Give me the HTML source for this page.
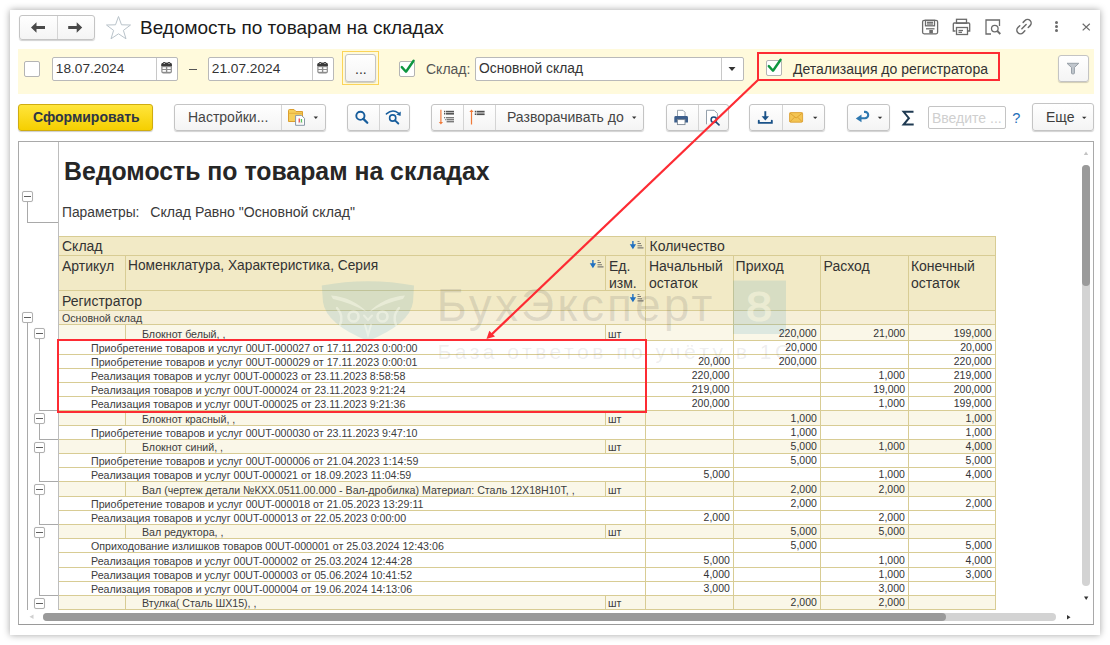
<!DOCTYPE html><html><head><meta charset="utf-8"><style>
*{margin:0;padding:0;box-sizing:border-box}
html,body{width:1110px;height:645px;overflow:hidden;background:#fff}
body{position:relative;font-family:"Liberation Sans",sans-serif}
.a,.t{position:absolute}
.t{white-space:nowrap}
.btn{position:absolute;border:1px solid #c4c4c4;border-radius:3px;background:linear-gradient(#fff,#f4f4f4);box-shadow:0 1px 1px rgba(0,0,0,.18)}
.sep{position:absolute;top:0;bottom:0;width:1px;background:#d4d4d4}
.fld{position:absolute;border:1px solid #b9b9b9;border-radius:2px;background:#fff}
.cb{position:absolute;border:1px solid #b4b4b4;border-radius:2px;background:#fff;width:16px;height:16px}
svg{position:absolute;overflow:visible}
</style></head><body>
<div class="a" style="left:10px;top:10px;width:1090px;height:625px;background:#fff;box-shadow:0 0 7px rgba(0,0,0,.36)"></div>
<div class="btn" style="left:19px;top:15px;width:76px;height:25px"><div class="sep" style="left:37px"></div></div>
<svg style="left:0;top:0" width="1" height="1"><path d="M31 27.5 L36.5 22.3 L36.5 25.9 L45 25.9 L45 29.1 L36.5 29.1 L36.5 32.7 Z" fill="#4a4a4a"/><path d="M82.2 27.5 L76.7 22.3 L76.7 25.9 L68.2 25.9 L68.2 29.1 L76.7 29.1 L76.7 32.7 Z" fill="#4a4a4a"/></svg>
<svg style="left:0;top:0" width="1" height="1"><path d="M118.5 16.5 L121.5 24.8 L130.5 25 L123.4 30.4 L126 38.8 L118.5 33.8 L111 38.8 L113.6 30.4 L106.5 25 L115.5 24.8 Z" fill="none" stroke="#b9c3ca" stroke-width="1"/></svg>
<div class="t" style="left:140.00px;top:18.22px;font-size:19px;line-height:19px;color:#1a1a1a;font-weight:400;">Ведомость по товарам на складах</div>
<svg style="left:0;top:0" width="1" height="1" fill="none" stroke="#6b6b6b" stroke-width="1.3">
<rect x="922.6" y="20.3" width="15" height="13.5" rx="1.5"/>
<rect x="925.5" y="20.3" width="9" height="5.5"/><line x1="927" y1="22.3" x2="933" y2="22.3"/><line x1="927" y1="24" x2="933" y2="24"/>
<rect x="929.3" y="30" width="3.6" height="3.2" fill="#6b6b6b" stroke="none"/><line x1="926" y1="28.8" x2="934.5" y2="28.8"/>
<rect x="956.5" y="19.3" width="10" height="4"/>
<path d="M955.5 31 H953.3 V24 a1 1 0 0 1 1-1 H968.7 a1 1 0 0 1 1 1 V31 H967.5"/>
<rect x="956.5" y="27.5" width="11" height="7"/><line x1="958.5" y1="30.5" x2="963" y2="30.5"/><line x1="958.5" y1="32.3" x2="962" y2="32.3"/>
<path d="M991 34 H986 V20 H999.5 V26"/>
<circle cx="994.8" cy="28.6" r="3.3"/><line x1="997.3" y1="31" x2="1000.3" y2="34" stroke-width="1.8"/>
<g transform="translate(1024 26.6) rotate(-45)"><path d="M2.4 -3.6 H5 a3.6 3.6 0 0 1 0 7.2 H2.4 M-2.4 -3.6 H-5 a3.6 3.6 0 0 0 0 7.2 H-2.4 M-3 0 H3" stroke-width="1.5" stroke-linecap="round"/></g>
</svg>
<div class="a" style="left:1055px;top:20.5px;width:3.2px;height:3.2px;border-radius:50%;background:#6b6b6b"></div>
<div class="a" style="left:1055px;top:24.6px;width:3.2px;height:3.2px;border-radius:50%;background:#6b6b6b"></div>
<div class="a" style="left:1055px;top:28.7px;width:3.2px;height:3.2px;border-radius:50%;background:#6b6b6b"></div>
<svg style="left:0;top:0" width="1" height="1"><path d="M1082.7 23.7 L1089.8 30.4 M1089.8 23.7 L1082.7 30.4" stroke="#6b6b6b" stroke-width="1.2"/></svg>
<div class="a" style="left:18px;top:49px;width:1076px;height:45px;background:#fffadc"></div>
<div class="cb" style="left:24px;top:61px;width:16px;height:16px"></div>
<div class="fld" style="left:52px;top:57px;width:126px;height:24px"><div class="sep" style="left:103px;background:#c8c8c8"></div></div>
<div class="t" style="left:55.80px;top:61.70px;font-size:13.7px;line-height:13.7px;color:#333;font-weight:400;">18.07.2024</div>
<svg style="left:0;top:0" width="1" height="1">
<rect x="161.3" y="62.8" width="10.6" height="10.6" rx="2" fill="#8c8c8c"/>
<path d="M161.3 66 V64.8 a2 2 0 0 1 2-2 H169.9 a2 2 0 0 1 2 2 V66 Z" fill="#3a3a3a"/>
<circle cx="164.20000000000002" cy="63.2" r="1.3" fill="#3a3a3a"/><circle cx="169.0" cy="63.2" r="1.3" fill="#3a3a3a"/>
<circle cx="164.20000000000002" cy="63.5" r="0.6" fill="#fff"/><circle cx="169.0" cy="63.5" r="0.6" fill="#fff"/>
<g fill="#fff"><rect x="162.5" y="67.2" width="3.4" height="1.8"/><rect x="167.3" y="67.2" width="3.4" height="1.8"/>
<rect x="162.5" y="70" width="3.4" height="1.8"/><rect x="167.3" y="70" width="3.4" height="1.8"/></g></svg>
<div class="fld" style="left:208px;top:57px;width:126px;height:24px"><div class="sep" style="left:103px;background:#c8c8c8"></div></div>
<div class="t" style="left:211.80px;top:61.70px;font-size:13.7px;line-height:13.7px;color:#333;font-weight:400;">21.07.2024</div>
<svg style="left:0;top:0" width="1" height="1">
<rect x="317.3" y="62.8" width="10.6" height="10.6" rx="2" fill="#8c8c8c"/>
<path d="M317.3 66 V64.8 a2 2 0 0 1 2-2 H325.90000000000003 a2 2 0 0 1 2 2 V66 Z" fill="#3a3a3a"/>
<circle cx="320.2" cy="63.2" r="1.3" fill="#3a3a3a"/><circle cx="325.0" cy="63.2" r="1.3" fill="#3a3a3a"/>
<circle cx="320.2" cy="63.5" r="0.6" fill="#fff"/><circle cx="325.0" cy="63.5" r="0.6" fill="#fff"/>
<g fill="#fff"><rect x="318.5" y="67.2" width="3.4" height="1.8"/><rect x="323.3" y="67.2" width="3.4" height="1.8"/>
<rect x="318.5" y="70" width="3.4" height="1.8"/><rect x="323.3" y="70" width="3.4" height="1.8"/></g></svg>
<div class="a" style="left:189px;top:69px;width:8px;height:1.2px;background:#555"></div>
<div class="a" style="left:342px;top:51px;width:37px;height:34px;border:1.5px solid #fbd458;background:transparent"></div>
<div class="btn" style="left:345px;top:54px;width:31px;height:28px"></div>
<div class="t" style="left:355.00px;top:61.65px;font-size:14px;line-height:14px;color:#333;font-weight:400;">...</div>
<div class="cb" style="left:399px;top:61px"></div>
<svg style="left:0;top:0" width="1" height="1"><path d="M401.8 67.1 L406 71.7 L413.6 60.8" fill="none" stroke="#0e9640" stroke-width="2.4" stroke-linecap="round" stroke-linejoin="round"/></svg>
<div class="t" style="left:426.00px;top:62.15px;font-size:14px;line-height:14px;color:#555;font-weight:400;">Склад:</div>
<div class="fld" style="left:475px;top:57px;width:269px;height:24px"><div class="sep" style="left:245px;background:#c8c8c8"></div></div>
<div class="t" style="left:479.00px;top:61.62px;font-size:13.8px;line-height:13.8px;color:#333;font-weight:400;">Основной склад</div>
<svg style="left:0;top:0" width="1" height="1"><path d="M728.5 67 L735.5 67 L732 71 Z" fill="#333"/></svg>
<div class="cb" style="left:766px;top:60px"></div>
<svg style="left:0;top:0" width="1" height="1"><path d="M768.8 66.1 L773 70.7 L780.6 59.8" fill="none" stroke="#0e9640" stroke-width="2.4" stroke-linecap="round" stroke-linejoin="round"/></svg>
<div class="t" style="left:793.00px;top:61.85px;font-size:14px;line-height:14px;color:#333;font-weight:400;">Детализация до регистратора</div>
<div class="btn" style="left:1058px;top:55px;width:31px;height:27px"></div>
<svg style="left:0;top:0" width="1" height="1"><path d="M1067 63.3 H1078.8 L1074.4 67.5 V73 a0.9 0.9 0 0 1 -0.9 0.9 H1072.4 a0.9 0.9 0 0 1 -0.9 -0.9 V67.5 Z" fill="#c0c6cc" stroke="#98a0a8" stroke-width="1"/></svg>
<div class="a" style="left:18px;top:104px;width:135px;height:27px;border:1px solid #cfac10;border-radius:3px;background:linear-gradient(#ffe53c,#f5cf00);box-shadow:0 1px 1px rgba(0,0,0,.2)"></div>
<div class="t" style="left:33.00px;top:109.75px;font-size:14px;line-height:14px;color:#2d3545;font-weight:700;">Сформировать</div>
<div class="btn" style="left:174px;top:104px;width:152px;height:27px"><div class="sep" style="left:106px"></div></div>
<div class="t" style="left:188.00px;top:110.15px;font-size:14px;line-height:14px;color:#454545;font-weight:400;">Настройки...</div>
<svg style="left:0;top:0" width="1" height="1"><path d="M313.6 116.5 L318 116.5 L315.8 119 Z" fill="#333"/></svg>
<div class="btn" style="left:347px;top:104px;width:63px;height:27px"><div class="sep" style="left:31px"></div></div>
<div class="btn" style="left:431px;top:104px;width:213px;height:27px"><div class="sep" style="left:31px"></div><div class="sep" style="left:63px"></div></div>
<div class="t" style="left:507.00px;top:110.15px;font-size:14px;line-height:14px;color:#454545;font-weight:400;">Разворачивать до</div>
<svg style="left:0;top:0" width="1" height="1"><path d="M632 116.5 L636.4 116.5 L634.2 119 Z" fill="#333"/></svg>
<div class="btn" style="left:666px;top:104px;width:63px;height:27px"><div class="sep" style="left:31px"></div></div>
<div class="btn" style="left:749px;top:104px;width:76px;height:27px"><div class="sep" style="left:32px"></div></div>
<svg style="left:0;top:0" width="1" height="1"><path d="M813 116.7 L817.4 116.7 L815.2 119.1 Z" fill="#333"/></svg>
<div class="btn" style="left:847px;top:104px;width:43px;height:27px"></div>
<svg style="left:0;top:0" width="1" height="1"><path d="M877.8 116.7 L882.2 116.7 L880 119 Z" fill="#333"/></svg>
<div class="fld" style="left:928px;top:106px;width:78px;height:23px;border-color:#c4c4c4"></div>
<div class="t" style="left:932.00px;top:110.65px;font-size:14px;line-height:14px;color:#cfcfcf;font-weight:400;">Введите ...</div>
<div class="t" style="left:1012.30px;top:110.53px;font-size:14.5px;line-height:14.5px;color:#1f6fba;font-weight:400;">?</div>
<div class="btn" style="left:1032px;top:103px;width:62px;height:28px"></div>
<div class="t" style="left:1046.00px;top:110.15px;font-size:14px;line-height:14px;color:#3d3d3d;font-weight:400;">Еще</div>
<svg style="left:0;top:0" width="1" height="1"><path d="M1082 116.8 L1086.5 116.8 L1084.2 119.1 Z" fill="#333"/></svg>
<svg style="left:0;top:0" width="1" height="1">
<path d="M288.5 121.5 V110.5 a1 1 0 0 1 1-1 H294 L296 111.5 H302.5 V121.5 Z" fill="#f6cf5a" stroke="#dc9e2e" stroke-width="1"/>
<path d="M288.5 113.3 H302.5" stroke="#e2aa3a" stroke-width="0.9"/>
<path d="M295.6 115.4 H301.5 L304.5 118.4 V125.3 H295.6 Z" fill="#fff" stroke="#8797a6" stroke-width="1"/>
<rect x="298.6" y="118.5" width="1.3" height="4" fill="#e84848"/><rect x="300.8" y="119" width="1.3" height="3.5" fill="#5cc05c"/>
<path d="M298 122.8 H303" stroke="#c8c0c0" stroke-width="0.5"/>
<circle cx="360.4" cy="115.8" r="4.1" fill="none" stroke="#175d9c" stroke-width="1.9"/>
<path d="M363.4 118.9 L367.3 122.8" stroke="#175d9c" stroke-width="2.2" stroke-linecap="round"/>
<circle cx="392.7" cy="118" r="3.1" fill="none" stroke="#175d9c" stroke-width="1.6"/>
<path d="M395 120.4 L398.3 123.5" stroke="#175d9c" stroke-width="1.9" stroke-linecap="round"/>
<path d="M386.4 113.9 Q392.5 108.5 398.4 113" fill="none" stroke="#175d9c" stroke-width="1.5" stroke-linecap="round"/>
<path d="M396.3 114.6 L400.8 111.6 L400.6 116 Z" fill="#175d9c"/>
<path d="M440.9 109.8 V122.5" stroke="#f07a3a" stroke-width="1.2"/><path d="M438.8 122 L443 122 L440.9 124.6 Z" fill="#f07a3a"/>
<g fill="#555"><rect x="444" y="110.8" width="1.3" height="1.5"/><rect x="444" y="113" width="1.3" height="1.5"/><rect x="446" y="110.8" width="8" height="1.6"/><rect x="446" y="113" width="8" height="1.6"/></g>
<g fill="#7a7a7a"><rect x="444" y="117" width="1.2" height="1.3"/><rect x="445.2" y="119" width="1" height="1.3"/><rect x="446" y="117" width="8" height="1.4"/><rect x="446.6" y="119" width="7.4" height="1.4"/><rect x="446.6" y="121" width="7.4" height="1.4"/></g>
<path d="M471.5 111.5 V124.5" stroke="#f07a3a" stroke-width="1.2"/><path d="M469.4 112 L473.6 112 L471.5 109.5 Z" fill="#f07a3a"/>
<g fill="#505050"><rect x="474.8" y="110.8" width="1.3" height="1.6"/><rect x="474.8" y="113.4" width="1.3" height="1.6"/><rect x="476.6" y="110.8" width="8" height="1.7"/><rect x="476.6" y="113.4" width="8" height="1.7"/></g>
<path d="M677.5 116 V110.3 H683 L685 112.3 V116" fill="#fff" stroke="#8a96a2" stroke-width="0.9"/>
<path d="M674.3 122.5 V117.4 a1.4 1.4 0 0 1 1.4-1.4 H686.6 a1.4 1.4 0 0 1 1.4 1.4 V122.5 Z" fill="#3d5f8c"/>
<rect x="677.4" y="119.6" width="7.6" height="5" fill="#fff" stroke="#7b8794" stroke-width="0.9"/>
<path d="M706.5 124.3 V110.3 H714.2 L717.4 113.5 V119" fill="#fff" stroke="#8895a2" stroke-width="0.9"/>
<circle cx="713.8" cy="119.8" r="2.7" fill="none" stroke="#1b4c7c" stroke-width="1.5"/>
<path d="M715.8 121.9 L719 124.9" stroke="#1b4c7c" stroke-width="1.7" stroke-linecap="round"/>
<path d="M765.3 111.2 V118" stroke="#1a5288" stroke-width="1.9"/><path d="M761.6 116.3 L769 116.3 L765.3 120.5 Z" fill="#1a5288"/>
<path d="M758.8 120.8 V122.9 H771.8 V120.8" fill="none" stroke="#1a5288" stroke-width="1.9" stroke-linecap="round"/>
<rect x="789.6" y="112.6" width="13" height="9.6" rx="1" fill="#f3c452" stroke="#dca033" stroke-width="0.9"/>
<path d="M789.8 113 L796.1 118 L802.4 113 M789.8 122 L794.5 117.2 M802.4 122 L797.7 117.2" fill="none" stroke="#d99a2a" stroke-width="0.8"/>
<path d="M861 118.3 H865 a3.2 3.2 0 0 0 0-6.4 H864" fill="none" stroke="#2e78b0" stroke-width="2.1"/>
<path d="M855.8 118.4 L861.5 114.6 L861.5 122.3 Z" fill="#2e78b0"/>
<path d="M913.5 111.8 H903.6 L908.9 118.2 L903.6 124.6 H913.7" fill="none" stroke="#1f3a52" stroke-width="2" stroke-linejoin="miter"/>
</svg>
<div class="a" style="left:18px;top:141px;width:1076px;height:484px;border:1px solid #a9a9a9;border-bottom-color:#9a9a9a"></div>
<div class="a" style="left:58px;top:142px;width:1px;height:468px;background:#bdbdbd"></div>
<div class="t" style="left:63.60px;top:158.49px;font-size:26px;line-height:26px;color:#262626;font-weight:700;transform:scaleX(0.955);transform-origin:0 0;">Ведомость по товарам на складах</div>
<div class="t" style="left:62.00px;top:205.62px;font-size:13.8px;line-height:13.8px;color:#3a3a3a;font-weight:400;">Параметры:</div>
<div class="t" style="left:150.30px;top:205.36px;font-size:14.1px;line-height:14.1px;color:#3a3a3a;font-weight:400;">Склад Равно "Основной склад"</div>
<div class="a" style="left:59px;top:236px;width:937px;height:75px;background:#f2eac6"></div>
<div class="a" style="left:59px;top:236px;width:937px;height:1px;background:#d8cc94"></div>
<div class="a" style="left:59px;top:255px;width:937px;height:1px;background:#d8cc94"></div>
<div class="a" style="left:59px;top:290px;width:587px;height:1px;background:#d8cc94"></div>
<div class="a" style="left:59px;top:310px;width:937px;height:1px;background:#d8cc94"></div>
<div class="a" style="left:995px;top:236px;width:1px;height:374px;background:#d8cc94"></div>
<div class="a" style="left:645px;top:236px;width:1px;height:75px;background:#d8cc94"></div>
<div class="a" style="left:125px;top:255px;width:1px;height:36px;background:#d8cc94"></div>
<div class="a" style="left:605px;top:255px;width:1px;height:36px;background:#d8cc94"></div>
<div class="a" style="left:733px;top:255px;width:1px;height:56px;background:#d8cc94"></div>
<div class="a" style="left:820px;top:255px;width:1px;height:56px;background:#d8cc94"></div>
<div class="a" style="left:908px;top:255px;width:1px;height:56px;background:#d8cc94"></div>
<div class="t" style="left:62.00px;top:239.45px;font-size:14px;line-height:14px;color:#333;font-weight:400;">Склад</div>
<div class="t" style="left:649.50px;top:239.45px;font-size:14px;line-height:14px;color:#333;font-weight:400;">Количество</div>
<div class="t" style="left:62.00px;top:258.55px;font-size:14px;line-height:14px;color:#333;font-weight:400;">Артикул</div>
<div class="t" style="left:128.00px;top:258.76px;font-size:13.75px;line-height:13.75px;color:#333;font-weight:400;">Номенклатура, Характеристика, Серия</div>
<div class="t" style="left:609.00px;top:258.55px;font-size:14px;line-height:14px;color:#333;font-weight:400;">Ед.</div>
<div class="t" style="left:609.00px;top:275.65px;font-size:14px;line-height:14px;color:#333;font-weight:400;">изм.</div>
<div class="t" style="left:649.00px;top:258.55px;font-size:14px;line-height:14px;color:#333;font-weight:400;">Начальный</div>
<div class="t" style="left:649.00px;top:275.65px;font-size:14px;line-height:14px;color:#333;font-weight:400;">остаток</div>
<div class="t" style="left:735.60px;top:258.55px;font-size:14px;line-height:14px;color:#333;font-weight:400;">Приход</div>
<div class="t" style="left:823.60px;top:258.55px;font-size:14px;line-height:14px;color:#333;font-weight:400;">Расход</div>
<div class="t" style="left:910.90px;top:258.55px;font-size:14px;line-height:14px;color:#333;font-weight:400;">Конечный</div>
<div class="t" style="left:910.90px;top:275.65px;font-size:14px;line-height:14px;color:#333;font-weight:400;">остаток</div>
<div class="t" style="left:62.00px;top:293.85px;font-size:14px;line-height:14px;color:#333;font-weight:400;">Регистратор</div>
<svg style="left:0;top:0" width="1" height="1"><path d="M632.9 241 V246 M631 245 L632.9 248 L634.8 245 Z" stroke="#1f6fc0" stroke-width="1.4" fill="#1f6fc0"/>
<g fill="#5f5f5f"><rect x="637.5" y="241" width="2" height="0.7"/><rect x="637.5" y="243.2" width="3.5" height="0.8"/><rect x="637.5" y="245.4" width="4.5" height="0.8"/><rect x="637.5" y="247.4" width="6" height="1"/></g></svg>
<svg style="left:0;top:0" width="1" height="1"><path d="M592.9 260 V265 M591 264 L592.9 267 L594.8 264 Z" stroke="#1f6fc0" stroke-width="1.4" fill="#1f6fc0"/>
<g fill="#5f5f5f"><rect x="597.5" y="260" width="2" height="0.7"/><rect x="597.5" y="262.2" width="3.5" height="0.8"/><rect x="597.5" y="264.4" width="4.5" height="0.8"/><rect x="597.5" y="266.4" width="6" height="1"/></g></svg>
<svg style="left:0;top:0" width="1" height="1"><path d="M632.9 294 V299 M631 298 L632.9 301 L634.8 298 Z" stroke="#1f6fc0" stroke-width="1.4" fill="#1f6fc0"/>
<g fill="#5f5f5f"><rect x="637.5" y="294" width="2" height="0.7"/><rect x="637.5" y="296.2" width="3.5" height="0.8"/><rect x="637.5" y="298.4" width="4.5" height="0.8"/><rect x="637.5" y="300.4" width="6" height="1"/></g></svg>
<div class="a" style="left:59px;top:311px;width:936px;height:13px;background:#f6efd8"></div>
<div class="a" style="left:59px;top:324px;width:937px;height:1px;background:#d8cc94"></div>
<div class="a" style="left:645px;top:310px;width:1px;height:15px;background:#d8cc94"></div>
<div class="a" style="left:733px;top:310px;width:1px;height:15px;background:#d8cc94"></div>
<div class="a" style="left:820px;top:310px;width:1px;height:15px;background:#d8cc94"></div>
<div class="a" style="left:908px;top:310px;width:1px;height:15px;background:#d8cc94"></div>
<div class="t" style="left:62.00px;top:312.08px;font-size:11.6px;line-height:11.6px;color:#3c3c3c;font-weight:400;transform:scaleX(0.9176);transform-origin:0 0;">Основной склад</div>
<div class="a" style="left:59px;top:325px;width:936px;height:15px;background:#faf7e8"></div>
<div class="a" style="left:59px;top:340px;width:937px;height:1px;background:#d8cc94"></div>
<div class="a" style="left:645px;top:324px;width:1px;height:17px;background:#d8cc94"></div>
<div class="a" style="left:733px;top:324px;width:1px;height:17px;background:#d8cc94"></div>
<div class="a" style="left:820px;top:324px;width:1px;height:17px;background:#d8cc94"></div>
<div class="a" style="left:908px;top:324px;width:1px;height:17px;background:#d8cc94"></div>
<div class="a" style="left:125px;top:324px;width:1px;height:17px;background:#d8cc94"></div>
<div class="a" style="left:605px;top:324px;width:1px;height:17px;background:#d8cc94"></div>
<div class="t" style="left:141.60px;top:328.08px;font-size:11.6px;line-height:11.6px;color:#3c3c3c;font-weight:400;transform:scaleX(0.9176);transform-origin:0 0;">Блокнот белый, ,</div>
<div class="t" style="left:608.00px;top:328.08px;font-size:11.6px;line-height:11.6px;color:#3c3c3c;font-weight:400;transform:scaleX(0.9176);transform-origin:0 0;">шт</div>
<div class="t" style="right:293px;top:328.17px;font-size:11.5px;line-height:11.5px;color:#333;transform:scaleX(0.91);transform-origin:100% 0">220,000</div>
<div class="t" style="right:205px;top:328.17px;font-size:11.5px;line-height:11.5px;color:#333;transform:scaleX(0.91);transform-origin:100% 0">21,000</div>
<div class="t" style="right:118px;top:328.17px;font-size:11.5px;line-height:11.5px;color:#333;transform:scaleX(0.91);transform-origin:100% 0">199,000</div>
<div class="a" style="left:59px;top:341px;width:936px;height:13px;background:#ffffff"></div>
<div class="a" style="left:59px;top:354px;width:937px;height:1px;background:#d8cc94"></div>
<div class="a" style="left:645px;top:340px;width:1px;height:15px;background:#d8cc94"></div>
<div class="a" style="left:733px;top:340px;width:1px;height:15px;background:#d8cc94"></div>
<div class="a" style="left:820px;top:340px;width:1px;height:15px;background:#d8cc94"></div>
<div class="a" style="left:908px;top:340px;width:1px;height:15px;background:#d8cc94"></div>
<div class="t" style="left:90.90px;top:342.08px;font-size:11.6px;line-height:11.6px;color:#3c3c3c;font-weight:400;transform:scaleX(0.9176);transform-origin:0 0;">Приобретение товаров и услуг 00UT-000027 от 17.11.2023 0:00:00</div>
<div class="t" style="right:293px;top:342.17px;font-size:11.5px;line-height:11.5px;color:#333;transform:scaleX(0.91);transform-origin:100% 0">20,000</div>
<div class="t" style="right:118px;top:342.17px;font-size:11.5px;line-height:11.5px;color:#333;transform:scaleX(0.91);transform-origin:100% 0">20,000</div>
<div class="a" style="left:59px;top:355px;width:936px;height:13px;background:#ffffff"></div>
<div class="a" style="left:59px;top:368px;width:937px;height:1px;background:#d8cc94"></div>
<div class="a" style="left:645px;top:354px;width:1px;height:15px;background:#d8cc94"></div>
<div class="a" style="left:733px;top:354px;width:1px;height:15px;background:#d8cc94"></div>
<div class="a" style="left:820px;top:354px;width:1px;height:15px;background:#d8cc94"></div>
<div class="a" style="left:908px;top:354px;width:1px;height:15px;background:#d8cc94"></div>
<div class="t" style="left:90.90px;top:356.08px;font-size:11.6px;line-height:11.6px;color:#3c3c3c;font-weight:400;transform:scaleX(0.9176);transform-origin:0 0;">Приобретение товаров и услуг 00UT-000029 от 17.11.2023 0:00:01</div>
<div class="t" style="right:380px;top:356.17px;font-size:11.5px;line-height:11.5px;color:#333;transform:scaleX(0.91);transform-origin:100% 0">20,000</div>
<div class="t" style="right:293px;top:356.17px;font-size:11.5px;line-height:11.5px;color:#333;transform:scaleX(0.91);transform-origin:100% 0">200,000</div>
<div class="t" style="right:118px;top:356.17px;font-size:11.5px;line-height:11.5px;color:#333;transform:scaleX(0.91);transform-origin:100% 0">220,000</div>
<div class="a" style="left:59px;top:369px;width:936px;height:13px;background:#ffffff"></div>
<div class="a" style="left:59px;top:382px;width:937px;height:1px;background:#d8cc94"></div>
<div class="a" style="left:645px;top:368px;width:1px;height:15px;background:#d8cc94"></div>
<div class="a" style="left:733px;top:368px;width:1px;height:15px;background:#d8cc94"></div>
<div class="a" style="left:820px;top:368px;width:1px;height:15px;background:#d8cc94"></div>
<div class="a" style="left:908px;top:368px;width:1px;height:15px;background:#d8cc94"></div>
<div class="t" style="left:90.90px;top:370.08px;font-size:11.6px;line-height:11.6px;color:#3c3c3c;font-weight:400;transform:scaleX(0.9176);transform-origin:0 0;">Реализация товаров и услуг 00UT-000023 от 23.11.2023 8:58:58</div>
<div class="t" style="right:380px;top:370.17px;font-size:11.5px;line-height:11.5px;color:#333;transform:scaleX(0.91);transform-origin:100% 0">220,000</div>
<div class="t" style="right:205px;top:370.17px;font-size:11.5px;line-height:11.5px;color:#333;transform:scaleX(0.91);transform-origin:100% 0">1,000</div>
<div class="t" style="right:118px;top:370.17px;font-size:11.5px;line-height:11.5px;color:#333;transform:scaleX(0.91);transform-origin:100% 0">219,000</div>
<div class="a" style="left:59px;top:383px;width:936px;height:13px;background:#ffffff"></div>
<div class="a" style="left:59px;top:396px;width:937px;height:1px;background:#d8cc94"></div>
<div class="a" style="left:645px;top:382px;width:1px;height:15px;background:#d8cc94"></div>
<div class="a" style="left:733px;top:382px;width:1px;height:15px;background:#d8cc94"></div>
<div class="a" style="left:820px;top:382px;width:1px;height:15px;background:#d8cc94"></div>
<div class="a" style="left:908px;top:382px;width:1px;height:15px;background:#d8cc94"></div>
<div class="t" style="left:90.90px;top:384.08px;font-size:11.6px;line-height:11.6px;color:#3c3c3c;font-weight:400;transform:scaleX(0.9176);transform-origin:0 0;">Реализация товаров и услуг 00UT-000024 от 23.11.2023 9:21:24</div>
<div class="t" style="right:380px;top:384.17px;font-size:11.5px;line-height:11.5px;color:#333;transform:scaleX(0.91);transform-origin:100% 0">219,000</div>
<div class="t" style="right:205px;top:384.17px;font-size:11.5px;line-height:11.5px;color:#333;transform:scaleX(0.91);transform-origin:100% 0">19,000</div>
<div class="t" style="right:118px;top:384.17px;font-size:11.5px;line-height:11.5px;color:#333;transform:scaleX(0.91);transform-origin:100% 0">200,000</div>
<div class="a" style="left:59px;top:397px;width:936px;height:13px;background:#ffffff"></div>
<div class="a" style="left:59px;top:410px;width:937px;height:1px;background:#d8cc94"></div>
<div class="a" style="left:645px;top:396px;width:1px;height:15px;background:#d8cc94"></div>
<div class="a" style="left:733px;top:396px;width:1px;height:15px;background:#d8cc94"></div>
<div class="a" style="left:820px;top:396px;width:1px;height:15px;background:#d8cc94"></div>
<div class="a" style="left:908px;top:396px;width:1px;height:15px;background:#d8cc94"></div>
<div class="t" style="left:90.90px;top:398.08px;font-size:11.6px;line-height:11.6px;color:#3c3c3c;font-weight:400;transform:scaleX(0.9176);transform-origin:0 0;">Реализация товаров и услуг 00UT-000025 от 23.11.2023 9:21:36</div>
<div class="t" style="right:380px;top:398.17px;font-size:11.5px;line-height:11.5px;color:#333;transform:scaleX(0.91);transform-origin:100% 0">200,000</div>
<div class="t" style="right:205px;top:398.17px;font-size:11.5px;line-height:11.5px;color:#333;transform:scaleX(0.91);transform-origin:100% 0">1,000</div>
<div class="t" style="right:118px;top:398.17px;font-size:11.5px;line-height:11.5px;color:#333;transform:scaleX(0.91);transform-origin:100% 0">199,000</div>
<div class="a" style="left:59px;top:411px;width:936px;height:14px;background:#faf7e8"></div>
<div class="a" style="left:59px;top:425px;width:937px;height:1px;background:#d8cc94"></div>
<div class="a" style="left:645px;top:410px;width:1px;height:16px;background:#d8cc94"></div>
<div class="a" style="left:733px;top:410px;width:1px;height:16px;background:#d8cc94"></div>
<div class="a" style="left:820px;top:410px;width:1px;height:16px;background:#d8cc94"></div>
<div class="a" style="left:908px;top:410px;width:1px;height:16px;background:#d8cc94"></div>
<div class="a" style="left:125px;top:410px;width:1px;height:16px;background:#d8cc94"></div>
<div class="a" style="left:605px;top:410px;width:1px;height:16px;background:#d8cc94"></div>
<div class="t" style="left:141.60px;top:413.08px;font-size:11.6px;line-height:11.6px;color:#3c3c3c;font-weight:400;transform:scaleX(0.9176);transform-origin:0 0;">Блокнот красный, ,</div>
<div class="t" style="left:608.00px;top:413.08px;font-size:11.6px;line-height:11.6px;color:#3c3c3c;font-weight:400;transform:scaleX(0.9176);transform-origin:0 0;">шт</div>
<div class="t" style="right:293px;top:413.17px;font-size:11.5px;line-height:11.5px;color:#333;transform:scaleX(0.91);transform-origin:100% 0">1,000</div>
<div class="t" style="right:118px;top:413.17px;font-size:11.5px;line-height:11.5px;color:#333;transform:scaleX(0.91);transform-origin:100% 0">1,000</div>
<div class="a" style="left:59px;top:426px;width:936px;height:13px;background:#ffffff"></div>
<div class="a" style="left:59px;top:439px;width:937px;height:1px;background:#d8cc94"></div>
<div class="a" style="left:645px;top:425px;width:1px;height:15px;background:#d8cc94"></div>
<div class="a" style="left:733px;top:425px;width:1px;height:15px;background:#d8cc94"></div>
<div class="a" style="left:820px;top:425px;width:1px;height:15px;background:#d8cc94"></div>
<div class="a" style="left:908px;top:425px;width:1px;height:15px;background:#d8cc94"></div>
<div class="t" style="left:90.90px;top:427.08px;font-size:11.6px;line-height:11.6px;color:#3c3c3c;font-weight:400;transform:scaleX(0.9176);transform-origin:0 0;">Приобретение товаров и услуг 00UT-000030 от 23.11.2023 9:47:10</div>
<div class="t" style="right:293px;top:427.17px;font-size:11.5px;line-height:11.5px;color:#333;transform:scaleX(0.91);transform-origin:100% 0">1,000</div>
<div class="t" style="right:118px;top:427.17px;font-size:11.5px;line-height:11.5px;color:#333;transform:scaleX(0.91);transform-origin:100% 0">1,000</div>
<div class="a" style="left:59px;top:440px;width:936px;height:13px;background:#faf7e8"></div>
<div class="a" style="left:59px;top:453px;width:937px;height:1px;background:#d8cc94"></div>
<div class="a" style="left:645px;top:439px;width:1px;height:15px;background:#d8cc94"></div>
<div class="a" style="left:733px;top:439px;width:1px;height:15px;background:#d8cc94"></div>
<div class="a" style="left:820px;top:439px;width:1px;height:15px;background:#d8cc94"></div>
<div class="a" style="left:908px;top:439px;width:1px;height:15px;background:#d8cc94"></div>
<div class="a" style="left:125px;top:439px;width:1px;height:15px;background:#d8cc94"></div>
<div class="a" style="left:605px;top:439px;width:1px;height:15px;background:#d8cc94"></div>
<div class="t" style="left:141.60px;top:441.08px;font-size:11.6px;line-height:11.6px;color:#3c3c3c;font-weight:400;transform:scaleX(0.9176);transform-origin:0 0;">Блокнот синий, ,</div>
<div class="t" style="left:608.00px;top:441.08px;font-size:11.6px;line-height:11.6px;color:#3c3c3c;font-weight:400;transform:scaleX(0.9176);transform-origin:0 0;">шт</div>
<div class="t" style="right:293px;top:441.17px;font-size:11.5px;line-height:11.5px;color:#333;transform:scaleX(0.91);transform-origin:100% 0">5,000</div>
<div class="t" style="right:205px;top:441.17px;font-size:11.5px;line-height:11.5px;color:#333;transform:scaleX(0.91);transform-origin:100% 0">1,000</div>
<div class="t" style="right:118px;top:441.17px;font-size:11.5px;line-height:11.5px;color:#333;transform:scaleX(0.91);transform-origin:100% 0">4,000</div>
<div class="a" style="left:59px;top:454px;width:936px;height:13px;background:#ffffff"></div>
<div class="a" style="left:59px;top:467px;width:937px;height:1px;background:#d8cc94"></div>
<div class="a" style="left:645px;top:453px;width:1px;height:15px;background:#d8cc94"></div>
<div class="a" style="left:733px;top:453px;width:1px;height:15px;background:#d8cc94"></div>
<div class="a" style="left:820px;top:453px;width:1px;height:15px;background:#d8cc94"></div>
<div class="a" style="left:908px;top:453px;width:1px;height:15px;background:#d8cc94"></div>
<div class="t" style="left:90.90px;top:455.08px;font-size:11.6px;line-height:11.6px;color:#3c3c3c;font-weight:400;transform:scaleX(0.9176);transform-origin:0 0;">Приобретение товаров и услуг 00UT-000006 от 21.04.2023 1:14:59</div>
<div class="t" style="right:293px;top:455.17px;font-size:11.5px;line-height:11.5px;color:#333;transform:scaleX(0.91);transform-origin:100% 0">5,000</div>
<div class="t" style="right:118px;top:455.17px;font-size:11.5px;line-height:11.5px;color:#333;transform:scaleX(0.91);transform-origin:100% 0">5,000</div>
<div class="a" style="left:59px;top:468px;width:936px;height:13px;background:#ffffff"></div>
<div class="a" style="left:59px;top:481px;width:937px;height:1px;background:#d8cc94"></div>
<div class="a" style="left:645px;top:467px;width:1px;height:15px;background:#d8cc94"></div>
<div class="a" style="left:733px;top:467px;width:1px;height:15px;background:#d8cc94"></div>
<div class="a" style="left:820px;top:467px;width:1px;height:15px;background:#d8cc94"></div>
<div class="a" style="left:908px;top:467px;width:1px;height:15px;background:#d8cc94"></div>
<div class="t" style="left:90.90px;top:469.08px;font-size:11.6px;line-height:11.6px;color:#3c3c3c;font-weight:400;transform:scaleX(0.9176);transform-origin:0 0;">Реализация товаров и услуг 00UT-000021 от 18.09.2023 11:04:59</div>
<div class="t" style="right:380px;top:469.17px;font-size:11.5px;line-height:11.5px;color:#333;transform:scaleX(0.91);transform-origin:100% 0">5,000</div>
<div class="t" style="right:205px;top:469.17px;font-size:11.5px;line-height:11.5px;color:#333;transform:scaleX(0.91);transform-origin:100% 0">1,000</div>
<div class="t" style="right:118px;top:469.17px;font-size:11.5px;line-height:11.5px;color:#333;transform:scaleX(0.91);transform-origin:100% 0">4,000</div>
<div class="a" style="left:59px;top:482px;width:936px;height:14px;background:#faf7e8"></div>
<div class="a" style="left:59px;top:496px;width:937px;height:1px;background:#d8cc94"></div>
<div class="a" style="left:645px;top:481px;width:1px;height:16px;background:#d8cc94"></div>
<div class="a" style="left:733px;top:481px;width:1px;height:16px;background:#d8cc94"></div>
<div class="a" style="left:820px;top:481px;width:1px;height:16px;background:#d8cc94"></div>
<div class="a" style="left:908px;top:481px;width:1px;height:16px;background:#d8cc94"></div>
<div class="a" style="left:125px;top:481px;width:1px;height:16px;background:#d8cc94"></div>
<div class="a" style="left:605px;top:481px;width:1px;height:16px;background:#d8cc94"></div>
<div class="t" style="left:141.60px;top:484.08px;font-size:11.6px;line-height:11.6px;color:#3c3c3c;font-weight:400;transform:scaleX(0.9176);transform-origin:0 0;">Вал (чертеж детали №КХХ.0511.00.000 - Вал-дробилка) Материал: Сталь 12Х18Н10Т, ,</div>
<div class="t" style="left:608.00px;top:484.08px;font-size:11.6px;line-height:11.6px;color:#3c3c3c;font-weight:400;transform:scaleX(0.9176);transform-origin:0 0;">шт</div>
<div class="t" style="right:293px;top:484.17px;font-size:11.5px;line-height:11.5px;color:#333;transform:scaleX(0.91);transform-origin:100% 0">2,000</div>
<div class="t" style="right:205px;top:484.17px;font-size:11.5px;line-height:11.5px;color:#333;transform:scaleX(0.91);transform-origin:100% 0">2,000</div>
<div class="a" style="left:59px;top:497px;width:936px;height:13px;background:#ffffff"></div>
<div class="a" style="left:59px;top:510px;width:937px;height:1px;background:#d8cc94"></div>
<div class="a" style="left:645px;top:496px;width:1px;height:15px;background:#d8cc94"></div>
<div class="a" style="left:733px;top:496px;width:1px;height:15px;background:#d8cc94"></div>
<div class="a" style="left:820px;top:496px;width:1px;height:15px;background:#d8cc94"></div>
<div class="a" style="left:908px;top:496px;width:1px;height:15px;background:#d8cc94"></div>
<div class="t" style="left:90.90px;top:498.08px;font-size:11.6px;line-height:11.6px;color:#3c3c3c;font-weight:400;transform:scaleX(0.9176);transform-origin:0 0;">Приобретение товаров и услуг 00UT-000018 от 21.05.2023 13:29:11</div>
<div class="t" style="right:293px;top:498.17px;font-size:11.5px;line-height:11.5px;color:#333;transform:scaleX(0.91);transform-origin:100% 0">2,000</div>
<div class="t" style="right:118px;top:498.17px;font-size:11.5px;line-height:11.5px;color:#333;transform:scaleX(0.91);transform-origin:100% 0">2,000</div>
<div class="a" style="left:59px;top:511px;width:936px;height:13px;background:#ffffff"></div>
<div class="a" style="left:59px;top:524px;width:937px;height:1px;background:#d8cc94"></div>
<div class="a" style="left:645px;top:510px;width:1px;height:15px;background:#d8cc94"></div>
<div class="a" style="left:733px;top:510px;width:1px;height:15px;background:#d8cc94"></div>
<div class="a" style="left:820px;top:510px;width:1px;height:15px;background:#d8cc94"></div>
<div class="a" style="left:908px;top:510px;width:1px;height:15px;background:#d8cc94"></div>
<div class="t" style="left:90.90px;top:512.08px;font-size:11.6px;line-height:11.6px;color:#3c3c3c;font-weight:400;transform:scaleX(0.9176);transform-origin:0 0;">Реализация товаров и услуг 00UT-000013 от 22.05.2023 0:00:00</div>
<div class="t" style="right:380px;top:512.17px;font-size:11.5px;line-height:11.5px;color:#333;transform:scaleX(0.91);transform-origin:100% 0">2,000</div>
<div class="t" style="right:205px;top:512.17px;font-size:11.5px;line-height:11.5px;color:#333;transform:scaleX(0.91);transform-origin:100% 0">2,000</div>
<div class="a" style="left:59px;top:525px;width:936px;height:13px;background:#faf7e8"></div>
<div class="a" style="left:59px;top:538px;width:937px;height:1px;background:#d8cc94"></div>
<div class="a" style="left:645px;top:524px;width:1px;height:15px;background:#d8cc94"></div>
<div class="a" style="left:733px;top:524px;width:1px;height:15px;background:#d8cc94"></div>
<div class="a" style="left:820px;top:524px;width:1px;height:15px;background:#d8cc94"></div>
<div class="a" style="left:908px;top:524px;width:1px;height:15px;background:#d8cc94"></div>
<div class="a" style="left:125px;top:524px;width:1px;height:15px;background:#d8cc94"></div>
<div class="a" style="left:605px;top:524px;width:1px;height:15px;background:#d8cc94"></div>
<div class="t" style="left:141.60px;top:526.08px;font-size:11.6px;line-height:11.6px;color:#3c3c3c;font-weight:400;transform:scaleX(0.9176);transform-origin:0 0;">Вал редуктора, ,</div>
<div class="t" style="left:608.00px;top:526.08px;font-size:11.6px;line-height:11.6px;color:#3c3c3c;font-weight:400;transform:scaleX(0.9176);transform-origin:0 0;">шт</div>
<div class="t" style="right:293px;top:526.17px;font-size:11.5px;line-height:11.5px;color:#333;transform:scaleX(0.91);transform-origin:100% 0">5,000</div>
<div class="t" style="right:205px;top:526.17px;font-size:11.5px;line-height:11.5px;color:#333;transform:scaleX(0.91);transform-origin:100% 0">5,000</div>
<div class="a" style="left:59px;top:539px;width:936px;height:13px;background:#ffffff"></div>
<div class="a" style="left:59px;top:552px;width:937px;height:1px;background:#d8cc94"></div>
<div class="a" style="left:645px;top:538px;width:1px;height:15px;background:#d8cc94"></div>
<div class="a" style="left:733px;top:538px;width:1px;height:15px;background:#d8cc94"></div>
<div class="a" style="left:820px;top:538px;width:1px;height:15px;background:#d8cc94"></div>
<div class="a" style="left:908px;top:538px;width:1px;height:15px;background:#d8cc94"></div>
<div class="t" style="left:90.90px;top:540.08px;font-size:11.6px;line-height:11.6px;color:#3c3c3c;font-weight:400;transform:scaleX(0.9176);transform-origin:0 0;">Оприходование излишков товаров 00UT-000001 от 25.03.2024 12:43:06</div>
<div class="t" style="right:293px;top:540.17px;font-size:11.5px;line-height:11.5px;color:#333;transform:scaleX(0.91);transform-origin:100% 0">5,000</div>
<div class="t" style="right:118px;top:540.17px;font-size:11.5px;line-height:11.5px;color:#333;transform:scaleX(0.91);transform-origin:100% 0">5,000</div>
<div class="a" style="left:59px;top:553px;width:936px;height:14px;background:#ffffff"></div>
<div class="a" style="left:59px;top:567px;width:937px;height:1px;background:#d8cc94"></div>
<div class="a" style="left:645px;top:552px;width:1px;height:16px;background:#d8cc94"></div>
<div class="a" style="left:733px;top:552px;width:1px;height:16px;background:#d8cc94"></div>
<div class="a" style="left:820px;top:552px;width:1px;height:16px;background:#d8cc94"></div>
<div class="a" style="left:908px;top:552px;width:1px;height:16px;background:#d8cc94"></div>
<div class="t" style="left:90.90px;top:555.08px;font-size:11.6px;line-height:11.6px;color:#3c3c3c;font-weight:400;transform:scaleX(0.9176);transform-origin:0 0;">Реализация товаров и услуг 00UT-000002 от 25.03.2024 12:44:28</div>
<div class="t" style="right:380px;top:555.17px;font-size:11.5px;line-height:11.5px;color:#333;transform:scaleX(0.91);transform-origin:100% 0">5,000</div>
<div class="t" style="right:205px;top:555.17px;font-size:11.5px;line-height:11.5px;color:#333;transform:scaleX(0.91);transform-origin:100% 0">1,000</div>
<div class="t" style="right:118px;top:555.17px;font-size:11.5px;line-height:11.5px;color:#333;transform:scaleX(0.91);transform-origin:100% 0">4,000</div>
<div class="a" style="left:59px;top:568px;width:936px;height:13px;background:#ffffff"></div>
<div class="a" style="left:59px;top:581px;width:937px;height:1px;background:#d8cc94"></div>
<div class="a" style="left:645px;top:567px;width:1px;height:15px;background:#d8cc94"></div>
<div class="a" style="left:733px;top:567px;width:1px;height:15px;background:#d8cc94"></div>
<div class="a" style="left:820px;top:567px;width:1px;height:15px;background:#d8cc94"></div>
<div class="a" style="left:908px;top:567px;width:1px;height:15px;background:#d8cc94"></div>
<div class="t" style="left:90.90px;top:569.08px;font-size:11.6px;line-height:11.6px;color:#3c3c3c;font-weight:400;transform:scaleX(0.9176);transform-origin:0 0;">Реализация товаров и услуг 00UT-000003 от 05.06.2024 10:41:52</div>
<div class="t" style="right:380px;top:569.17px;font-size:11.5px;line-height:11.5px;color:#333;transform:scaleX(0.91);transform-origin:100% 0">4,000</div>
<div class="t" style="right:205px;top:569.17px;font-size:11.5px;line-height:11.5px;color:#333;transform:scaleX(0.91);transform-origin:100% 0">1,000</div>
<div class="t" style="right:118px;top:569.17px;font-size:11.5px;line-height:11.5px;color:#333;transform:scaleX(0.91);transform-origin:100% 0">3,000</div>
<div class="a" style="left:59px;top:582px;width:936px;height:13px;background:#ffffff"></div>
<div class="a" style="left:59px;top:595px;width:937px;height:1px;background:#d8cc94"></div>
<div class="a" style="left:645px;top:581px;width:1px;height:15px;background:#d8cc94"></div>
<div class="a" style="left:733px;top:581px;width:1px;height:15px;background:#d8cc94"></div>
<div class="a" style="left:820px;top:581px;width:1px;height:15px;background:#d8cc94"></div>
<div class="a" style="left:908px;top:581px;width:1px;height:15px;background:#d8cc94"></div>
<div class="t" style="left:90.90px;top:583.08px;font-size:11.6px;line-height:11.6px;color:#3c3c3c;font-weight:400;transform:scaleX(0.9176);transform-origin:0 0;">Реализация товаров и услуг 00UT-000004 от 19.06.2024 14:13:06</div>
<div class="t" style="right:380px;top:583.17px;font-size:11.5px;line-height:11.5px;color:#333;transform:scaleX(0.91);transform-origin:100% 0">3,000</div>
<div class="t" style="right:205px;top:583.17px;font-size:11.5px;line-height:11.5px;color:#333;transform:scaleX(0.91);transform-origin:100% 0">3,000</div>
<div class="a" style="left:59px;top:596px;width:936px;height:13px;background:#faf7e8"></div>
<div class="a" style="left:59px;top:609px;width:937px;height:1px;background:#d8cc94"></div>
<div class="a" style="left:645px;top:595px;width:1px;height:15px;background:#d8cc94"></div>
<div class="a" style="left:733px;top:595px;width:1px;height:15px;background:#d8cc94"></div>
<div class="a" style="left:820px;top:595px;width:1px;height:15px;background:#d8cc94"></div>
<div class="a" style="left:908px;top:595px;width:1px;height:15px;background:#d8cc94"></div>
<div class="a" style="left:125px;top:595px;width:1px;height:15px;background:#d8cc94"></div>
<div class="a" style="left:605px;top:595px;width:1px;height:15px;background:#d8cc94"></div>
<div class="t" style="left:141.60px;top:597.08px;font-size:11.6px;line-height:11.6px;color:#3c3c3c;font-weight:400;transform:scaleX(0.9176);transform-origin:0 0;">Втулка( Сталь ШХ15), ,</div>
<div class="t" style="left:608.00px;top:597.08px;font-size:11.6px;line-height:11.6px;color:#3c3c3c;font-weight:400;transform:scaleX(0.9176);transform-origin:0 0;">шт</div>
<div class="t" style="right:293px;top:597.17px;font-size:11.5px;line-height:11.5px;color:#333;transform:scaleX(0.91);transform-origin:100% 0">2,000</div>
<div class="t" style="right:205px;top:597.17px;font-size:11.5px;line-height:11.5px;color:#333;transform:scaleX(0.91);transform-origin:100% 0">2,000</div>
<div class="a" style="left:0;top:0;width:1110px;height:645px;pointer-events:none">
<svg style="left:0;top:0" width="1" height="1">
<path d="M321.8 285.5 Q368 277 414 285.5 L413 302 Q410 324 368 341 Q326 324 323 302 Z" fill="rgba(63,147,179,0.15)"/>
<g fill="rgba(255,255,240,0.42)" stroke="none">
<path d="M331 295.5 Q352 297 367.5 312.5 Q352 303 333 299 Z"/>
<path d="M405 295.5 Q384 297 368.5 312.5 Q384 303 403 299 Z"/>
</g>
<g fill="none" stroke="rgba(255,255,240,0.42)" stroke-width="2.6" stroke-linecap="round">
<circle cx="353.5" cy="316.5" r="5"/><circle cx="382.5" cy="316.5" r="5"/>
<path d="M364 315.5 L368 320 L372 315.5" stroke-width="2"/>
<path d="M365 325 L368 335 L371 325" stroke-width="2"/>
<path d="M337 308 Q344 316 340 325 M399 308 Q392 316 396 325" stroke-width="2.4"/>
</g>
<rect x="733" y="280.6" width="53" height="53.4" fill="rgba(63,147,179,0.15)"/>
</svg>
<div class="t" style="left:436.5px;top:281.6px;font-size:46px;line-height:46px;letter-spacing:3.1px;color:rgba(90,90,90,0.16)">БухЭксперт</div>
<div class="t" style="left:746px;top:285.5px;font-size:42px;line-height:42px;font-weight:400;-webkit-text-stroke:1.2px #fffae1;color:#fffae1;opacity:0.5;transform:scaleX(1.12);transform-origin:0 0">8</div>
<div class="t" style="left:437.5px;top:340.5px;font-size:21px;line-height:21px;letter-spacing:3.5px;color:rgba(90,90,90,0.11)">База ответов по учёту в 1С</div>
</div>
<div class="a" style="left:27px;top:196px;width:1px;height:27px;background:#a9a9a9"></div>
<div class="a" style="left:27px;top:222px;width:31px;height:1px;background:#a9a9a9"></div>
<div class="a" style="left:22px;top:191px;width:11px;height:11px;border:1px solid #b0b0b0;border-radius:2px;background:#fff;box-shadow:0 0 1px rgba(0,0,0,.15)"><div class="a" style="left:1px;top:3.8px;width:7px;height:1.6px;background:#606060"></div></div>
<div class="a" style="left:27px;top:323px;width:1px;height:287px;background:#a9a9a9"></div>
<div class="a" style="left:22px;top:312px;width:11px;height:11px;border:1px solid #b0b0b0;border-radius:2px;background:#fff;box-shadow:0 0 1px rgba(0,0,0,.15)"><div class="a" style="left:1px;top:3.8px;width:7px;height:1.6px;background:#606060"></div></div>
<div class="a" style="left:39px;top:338px;width:1px;height:72px;background:#a9a9a9"></div>
<div class="a" style="left:39px;top:410px;width:19px;height:1px;background:#a9a9a9"></div>
<div class="a" style="left:34px;top:328px;width:11px;height:11px;border:1px solid #b0b0b0;border-radius:2px;background:#fff;box-shadow:0 0 1px rgba(0,0,0,.15)"><div class="a" style="left:1px;top:3.8px;width:7px;height:1.6px;background:#606060"></div></div>
<div class="a" style="left:39px;top:423px;width:1px;height:16px;background:#a9a9a9"></div>
<div class="a" style="left:39px;top:439px;width:19px;height:1px;background:#a9a9a9"></div>
<div class="a" style="left:34px;top:413px;width:11px;height:11px;border:1px solid #b0b0b0;border-radius:2px;background:#fff;box-shadow:0 0 1px rgba(0,0,0,.15)"><div class="a" style="left:1px;top:3.8px;width:7px;height:1.6px;background:#606060"></div></div>
<div class="a" style="left:39px;top:452px;width:1px;height:29px;background:#a9a9a9"></div>
<div class="a" style="left:39px;top:481px;width:19px;height:1px;background:#a9a9a9"></div>
<div class="a" style="left:34px;top:442px;width:11px;height:11px;border:1px solid #b0b0b0;border-radius:2px;background:#fff;box-shadow:0 0 1px rgba(0,0,0,.15)"><div class="a" style="left:1px;top:3.8px;width:7px;height:1.6px;background:#606060"></div></div>
<div class="a" style="left:39px;top:494px;width:1px;height:30px;background:#a9a9a9"></div>
<div class="a" style="left:39px;top:524px;width:19px;height:1px;background:#a9a9a9"></div>
<div class="a" style="left:34px;top:484px;width:11px;height:11px;border:1px solid #b0b0b0;border-radius:2px;background:#fff;box-shadow:0 0 1px rgba(0,0,0,.15)"><div class="a" style="left:1px;top:3.8px;width:7px;height:1.6px;background:#606060"></div></div>
<div class="a" style="left:39px;top:537px;width:1px;height:58px;background:#a9a9a9"></div>
<div class="a" style="left:39px;top:595px;width:19px;height:1px;background:#a9a9a9"></div>
<div class="a" style="left:34px;top:527px;width:11px;height:11px;border:1px solid #b0b0b0;border-radius:2px;background:#fff;box-shadow:0 0 1px rgba(0,0,0,.15)"><div class="a" style="left:1px;top:3.8px;width:7px;height:1.6px;background:#606060"></div></div>
<div class="a" style="left:34px;top:598px;width:11px;height:11px;border:1px solid #b0b0b0;border-radius:2px;background:#fff;box-shadow:0 0 1px rgba(0,0,0,.15)"><div class="a" style="left:1px;top:3.8px;width:7px;height:1.6px;background:#606060"></div></div>
<div class="a" style="left:1082px;top:165px;width:8px;height:421px;background:#d3d3d3;border-radius:4px"></div>
<div class="a" style="left:1082px;top:165px;width:8px;height:121px;background:#9a9a9a;border-radius:4px"></div>
<svg style="left:0;top:0" width="1" height="1"><path d="M1083.8 155 L1088.2 155 L1086 151.5 Z" fill="#c4c4c4"/><path d="M1084 596.5 L1088.4 596.5 L1086.2 600 Z" fill="#333"/><path d="M1067 615 L1067 619.4 L1070.5 617.2 Z" fill="#333"/><path d="M33.5 619 L29.5 616.8 L33.5 614.6 Z" fill="#d0d0d0"/></svg>
<div class="a" style="left:43px;top:613px;width:1013px;height:8px;background:#d3d3d3;border-radius:4px"></div>
<div class="a" style="left:43px;top:613px;width:903px;height:8px;background:#9a9a9a;border-radius:4px"></div>
<div class="a" style="left:757px;top:52px;width:243px;height:29px;border:2px solid #fd2b33"></div>
<div class="a" style="left:57px;top:339px;width:590px;height:74px;border:2px solid #fd2b33"></div>
<svg style="left:0;top:0" width="1" height="1"><path d="M758 80 L491 335" stroke="#fd2b33" stroke-width="2.2"/><path d="M486.5 339 L489.3 330.8 L495 336.4 Z" fill="#fd2b33"/></svg>
</body></html>
